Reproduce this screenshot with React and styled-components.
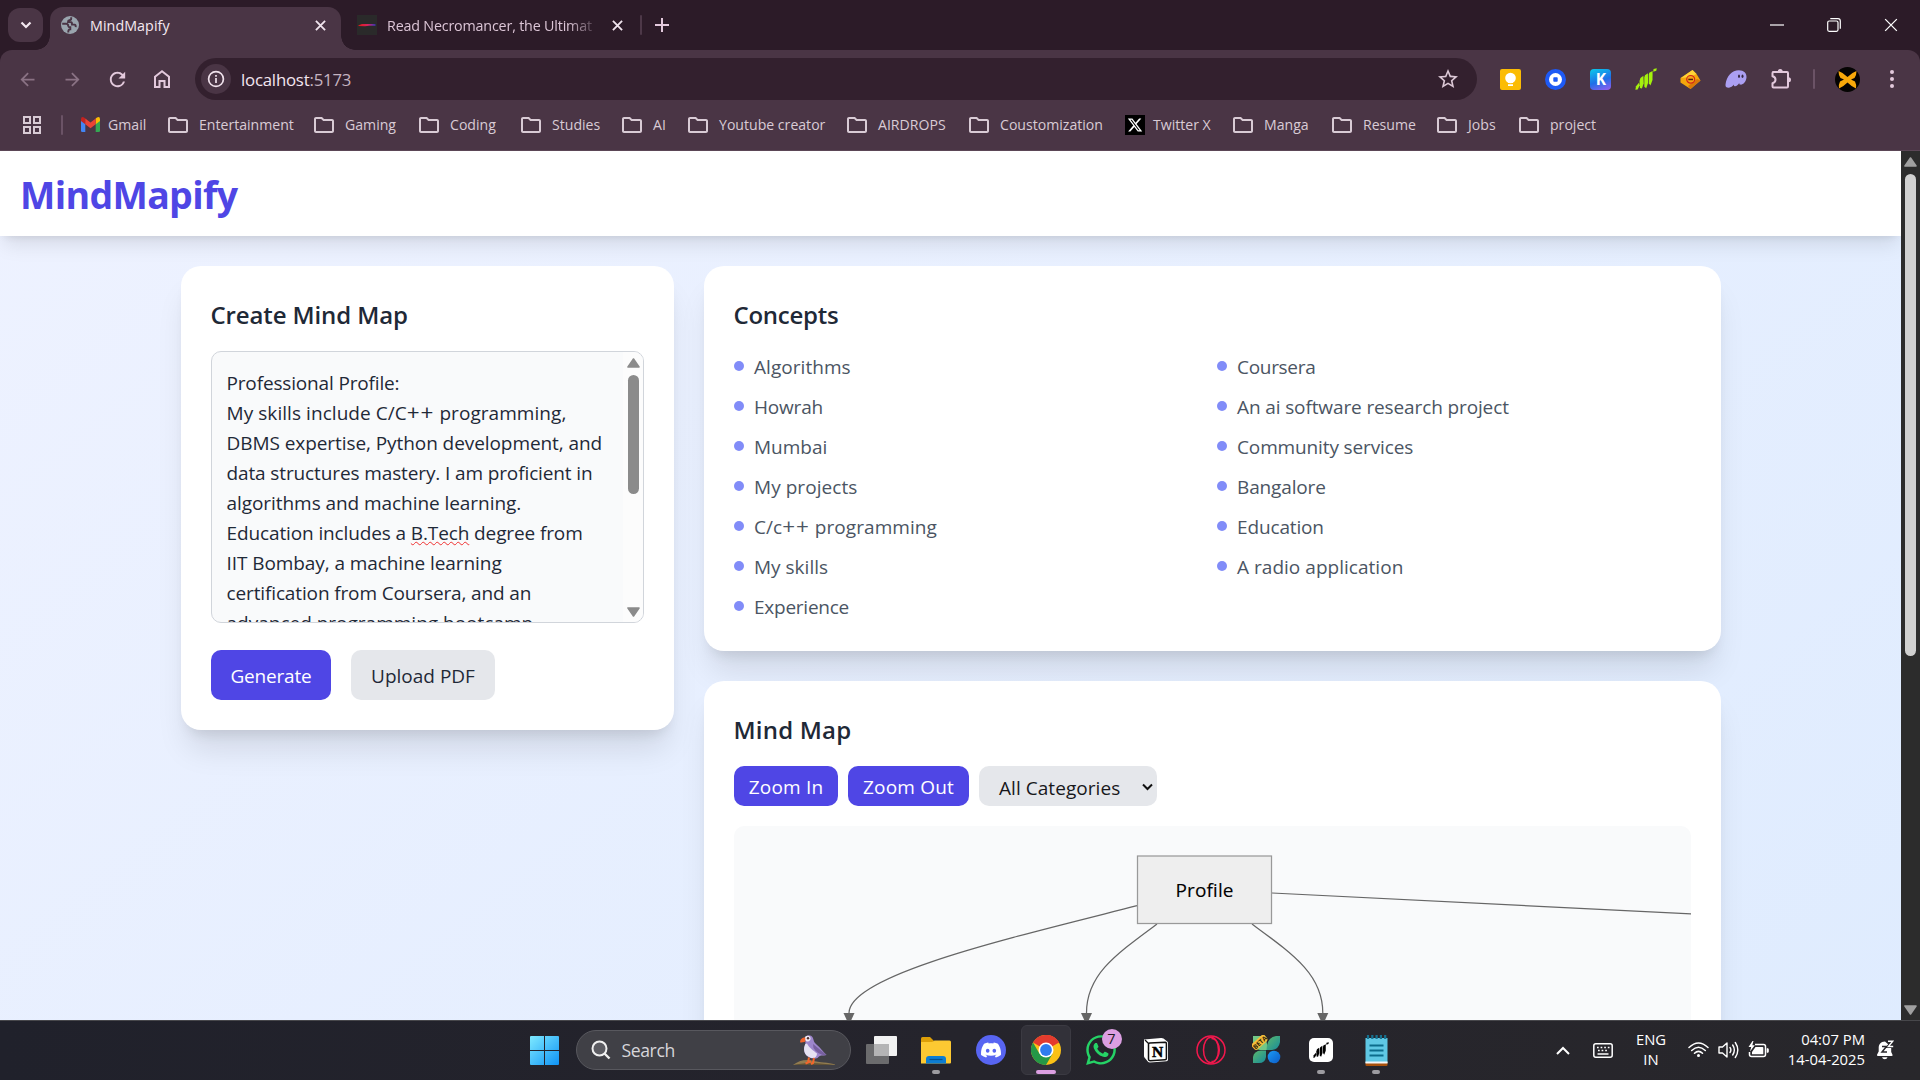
import React from "react";
import styled, { createGlobalStyle } from "styled-components";
import {
  MdArrowBack,
  MdArrowForward,
  MdRefresh,
  MdOutlineFolder,
  MdStarOutline,
} from "react-icons/md";
import { FaXTwitter, FaWhatsapp } from "react-icons/fa6";
import { SiDiscord } from "react-icons/si";

const FONT = '"Open Sans", "Noto Sans", sans-serif';

const GlobalStyle = createGlobalStyle`
  * { box-sizing: border-box; }
  body { margin: 0; background: #2c1b28; font-family: ${FONT}; overflow: hidden; }
  svg { display: block; flex: none; }
`;

const Screen = styled.div`
  width: 1920px;
  height: 1080px;
  display: flex;
  flex-direction: column;
  overflow: hidden;
`;

/* ---------- browser chrome ---------- */

const Browser = styled.header`
  background: #2c1b28;
  flex: none;
  color: #ecdde8;
`;

const TabStrip = styled.div`
  height: 50px;
  display: flex;
  align-items: center;
  padding-left: 8px;
`;

const TabSearch = styled.div`
  width: 35px;
  height: 34px;
  border-radius: 12px;
  background: #4a3545;
  display: grid;
  place-items: center;
`;

const Tab = styled.div`
  position: relative;
  align-self: flex-end;
  height: 43px;
  width: ${(p) => p.$w}px;
  margin-left: ${(p) => p.$ml || 0}px;
  padding: 0 ${(p) => p.$pr}px 7px 11px;
  display: flex;
  align-items: center;
  background: ${(p) => (p.$active ? "#4a3545" : "transparent")};
  border-radius: 13px 13px 0 0;
  ${(p) =>
    p.$active &&
    `
    &::before, &::after {
      content: "";
      position: absolute;
      bottom: 0;
      width: 14px;
      height: 14px;
    }
    &::before { left: -14px; background: radial-gradient(circle at 0 0, transparent 13.5px, #4a3545 14px); }
    &::after { right: -14px; background: radial-gradient(circle at 100% 0, transparent 13.5px, #4a3545 14px); }
  `}
`;

const TabTitle = styled.span`
  flex: 1;
  margin: 0 ${(p) => p.$mr || 10}px 0 ${(p) => p.$ml}px;
  font-size: 14.3px;
  letter-spacing: ${(p) => p.$ls || 0}px;
  white-space: nowrap;
  color: ${(p) => (p.$fade ? "#dcc5d6" : "#f4e9f1")};
  ${(p) => p.$fade && "mask-image: linear-gradient(90deg, #000 86%, rgba(0, 0, 0, 0.1) 100%);"}
`;

const Rule = styled.span`
  width: 2px;
  height: 20px;
  border-radius: 1px;
  background: ${(p) => p.$color || "#6b5366"};
  margin: 0 ${(p) => p.$mr || 0}px 0 ${(p) => p.$ml || 0}px;
`;

const WindowButtons = styled.div`
  margin: 0 1px 0 auto;
  display: flex;
  align-items: center;
  height: 48px;
`;

const WindowButton = styled.span`
  width: 57px;
  display: grid;
  place-items: center;
`;

const Toolbar = styled.div`
  height: 58px;
  padding: 0 0 0 5px;
  display: flex;
  align-items: center;
  background: #4a3545;
  border-radius: 12px 12px 0 0;
`;

const NavButton = styled.span`
  width: 44.9px;
  display: grid;
  place-items: center;
  color: ${(p) => (p.$off ? "#8a7284" : "#e3c9dc")};
`;

const Omnibox = styled.div`
  width: 1282px;
  height: 42px;
  margin-left: 10.4px;
  padding: 0 17px 0 6px;
  border-radius: 21px;
  background: #33202e;
  display: flex;
  align-items: center;
`;

const SiteInfo = styled.span`
  width: 30px;
  height: 30px;
  border-radius: 50%;
  background: #4a3545;
  display: grid;
  place-items: center;
`;

const Url = styled.span`
  flex: 1;
  margin-left: 10px;
  font-size: 16.8px;
  letter-spacing: -0.2px;
  color: #f3e6f0;
  i { font-style: normal; color: #c5b3c0; }
`;

const Extensions = styled.div`
  margin-left: 11.5px;
  display: flex;
  align-items: center;
`;

const ExtButton = styled.span`
  width: 45px;
  display: grid;
  place-items: center;
`;

const MenuButton = styled(ExtButton)`
  margin-left: 10px;
`;

const KTile = styled.span`
  width: 21px;
  height: 21px;
  border-radius: 4px;
  background: linear-gradient(160deg, #0bc3ea 5%, #1f6fe8 55%, #9a5cf0 100%);
  color: #fff;
  font-size: 15.5px;
  font-weight: 700;
  line-height: 21px;
  text-align: center;
`;

const Bookmarks = styled.div`
  height: 43px;
  padding: 0 0 9px 23px;
  display: flex;
  align-items: center;
  background: #4a3545;
  border-bottom: 1px solid #5b4656;
`;

const Bookmark = styled.span`
  width: ${(p) => p.$w}px;
  flex: none;
  display: flex;
  align-items: center;
  gap: ${(p) => p.$gap || 11}px;
  font-size: 14.1px;
  letter-spacing: ${(p) => p.$ls || 0}px;
  white-space: nowrap;
  color: #d9cbd5;
  svg { margin: 0 ${(p) => (p.$folder ? -1.5 : 0)}px; }
`;

const XTile = styled.span`
  width: 20px;
  height: 20px;
  background: #000;
  color: #fff;
  display: grid;
  place-items: center;
`;

/* ---------- page ---------- */

const Viewport = styled.div`
  flex: 1;
  min-height: 0;
  display: flex;
`;

const Page = styled.div`
  flex: 1;
  overflow: hidden;
  background: linear-gradient(to bottom right, #eef2ff, #dbeafe) 0 0 / 100% 1495px;
`;

const PageHeader = styled.div`
  height: 85px;
  padding: 0 20px;
  display: flex;
  align-items: center;
  background: #fff;
  box-shadow: 0 12px 19px -4px rgba(0, 0, 0, 0.1), 0 5px 8px -5px rgba(0, 0, 0, 0.1);
`;

const Brand = styled.h1`
  margin: 2px 0 0;
  font-size: 37.5px;
  font-weight: 700;
  letter-spacing: -0.68px;
  color: #4f46e5;
`;

const Content = styled.main`
  padding: 30px 0 0 181px;
  display: grid;
  grid-template-columns: 493px 1017px;
  gap: 30px;
  align-items: start;
`;

const Column = styled.div`
  display: grid;
  gap: 30px;
`;

const Card = styled.section`
  height: ${(p) => p.$h}px;
  padding: 30px;
  border-radius: 20px;
  background: #fff;
  box-shadow: 0 25px 31px -6px rgba(0, 0, 0, 0.1), 0 10px 13px -7px rgba(0, 0, 0, 0.1);
`;

const CardTitle = styled.h2`
  margin: 0 0 20px -0.5px;
  height: 35px;
  line-height: 38px;
  font-size: 24px;
  font-weight: 600;
  letter-spacing: ${(p) => p.$ls || 0}px;
  color: #1f2937;
`;

const NoteBox = styled.div`
  height: 272px;
  display: flex;
  border: 1px solid #d1d5db;
  border-radius: 10px;
  background: #f9fafb;
  overflow: hidden;
`;

const NoteText = styled.div`
  flex: 1;
  padding: 16px 0 0 14.5px;
`;

const NoteLine = styled.div`
  height: 30px;
  line-height: 30px;
  font-size: 19px;
  letter-spacing: ${(p) => p.$ls || 0}px;
  white-space: nowrap;
  color: #1f2937;
`;

const Plus = styled.b`
  font-size: 22.5px;
  font-weight: 400;
  line-height: 0;
  letter-spacing: 0.9px;
`;

const Misspelled = styled.span`
  text-decoration: underline wavy #f03030 1.3px;
  text-underline-offset: 1px;
  text-decoration-skip-ink: none;
`;

const NoteScroll = styled.div`
  width: 20px;
  background: #fcfcfc;
  display: flex;
  flex-direction: column;
  align-items: center;
  padding: 6px 0 5px;
`;

const Thumb = styled.span`
  width: ${(p) => p.$w}px;
  height: ${(p) => p.$h}px;
  border-radius: 6px;
  background: ${(p) => p.$color};
  margin: 7px 0 auto;
`;

const ButtonRow = styled.div`
  display: flex;
  gap: ${(p) => p.$gap}px;
  margin-top: ${(p) => p.$mt || 0}px;
`;

const Button = styled.button`
  width: ${(p) => p.$w}px;
  height: ${(p) => p.$h}px;
  padding: 2px 0 0;
  border: 0;
  border-radius: 10px;
  font-family: inherit;
  font-size: 19px;
  font-weight: ${(p) => (p.$primary ? 500 : 400)};
  letter-spacing: ${(p) => p.$ls || 0}px;
  color: ${(p) => (p.$primary ? "#fff" : "#1f2937")};
  background: ${(p) => (p.$primary ? "#4f46e5" : "#e5e7eb")};
`;

const Picker = styled.div`
  width: 178px;
  height: 40px;
  padding: 3px 4.5px 0 20px;
  border-radius: 10px;
  background: #e5e7eb;
  display: flex;
  align-items: center;
  justify-content: space-between;
  font-size: 19px;
  letter-spacing: 0.05px;
  white-space: nowrap;
  color: #18181b;
  svg { margin-top: -2px; }
`;

const ConceptGrid = styled.div`
  margin-top: -5px;
  display: grid;
  grid-template-rows: repeat(7, 40px);
  grid-auto-flow: column;
  grid-template-columns: 1fr 1fr;
  column-gap: 9px;
`;

const Concept = styled.div`
  display: flex;
  align-items: center;
  gap: 10px;
  font-size: 19px;
  letter-spacing: ${(p) => p.$ls || 0}px;
  color: #4b5563;
  span { padding-top: 1px; }
  &::before {
    content: "";
    width: 10px;
    height: 10px;
    border-radius: 50%;
    background: #818cf8;
  }
`;

const Canvas = styled.div`
  height: 500px;
  margin-top: 20px;
  border-radius: 10px;
  background: #f9fafb;
  overflow: hidden;
`;

const PageScroll = styled.div`
  width: 19px;
  background: #2c2c2c;
  display: flex;
  flex-direction: column;
  align-items: center;
  padding: 6px 0 5px;
`;

/* ---------- taskbar ---------- */

const Taskbar = styled.footer`
  height: 60px;
  flex: none;
  display: flex;
  align-items: flex-start;
  padding-left: 517px;
  background: linear-gradient(90deg, #20212b, #25242c 50%, #28272b);
  border-top: 1px solid #47474b;
  color: #fff;
`;

const TaskItem = styled.div`
  position: relative;
  width: ${(p) => p.$w || 55}px;
  height: 58px;
  display: grid;
  place-items: center;
  &::after {
    content: "";
    position: absolute;
    bottom: 5px;
    left: 50%;
    transform: translateX(-50%);
    width: ${(p) => (p.$state === "active" ? 20 : 8)}px;
    height: 4px;
    border-radius: 2px;
    background: ${(p) =>
      p.$state === "active" ? "#dc9fe2" : p.$state === "open" ? "#9c9ba0" : "transparent"};
  }
`;

const ActiveTile = styled.span`
  width: 50px;
  height: 50px;
  border-radius: 6px;
  background: #323139;
  border: 1px solid #3b3a42;
  display: grid;
  place-items: center;
`;

const SearchPill = styled.div`
  width: 275px;
  height: 40px;
  margin: 9px 4px 0 3.5px;
  padding: 0 14px 0 14px;
  display: flex;
  align-items: center;
  border-radius: 20px;
  background: #404046;
  border: 1px solid #58585e;
  font-size: 17.6px;
  letter-spacing: -0.4px;
  color: #d6d6da;
  span { flex: 1; margin-left: 11px; }
`;

const Discord = styled.span`
  width: 30px;
  height: 30px;
  border-radius: 50%;
  background: #5865f2;
  display: grid;
  place-items: center;
  color: #fff;
`;

const Badge = styled.span`
  position: absolute;
  left: 28px;
  top: 8px;
  width: 20px;
  height: 20px;
  border-radius: 50%;
  background: #dc9fe2;
  color: #1e1b22;
  font-size: 14.5px;
  line-height: 20px;
  text-align: center;
`;

const WhiteTile = styled.span`
  width: 24px;
  height: 24px;
  border-radius: 5px;
  background: #fff;
  display: grid;
  place-items: center;
`;

const Tray = styled.div`
  margin-left: auto;
  padding-right: 15px;
  display: flex;
  align-items: center;
  height: 58px;
`;

const TraySlot = styled.span`
  width: ${(p) => p.$w}px;
  display: grid;
  place-items: center;
`;

const TrayText = styled.div`
  width: ${(p) => p.$w}px;
  margin-top: -2px;
  text-align: ${(p) => p.$align};
  font-size: 14.8px;
  line-height: 20px;
  letter-spacing: ${(p) => p.$ls || 0}px;
  white-space: nowrap;
`;

/* ---------- small drawings ---------- */

const Cross = ({ s = 11, w = 2, c = "#f0e4ed" }) => (
  <svg width={s} height={s} viewBox="0 0 12 12">
    <path d="M1 1 11 11M11 1 1 11" stroke={c} strokeWidth={w} fill="none" />
  </svg>
);

const Triangle = ({ down, c, w = 13, h = 10 }) => (
  <svg width={w} height={h} viewBox="0 0 13 10">
    <path
      d={down ? "M1 1H12L6.5 9Z" : "M1 9H12L6.5 1Z"}
      fill={c}
      stroke={c}
      strokeWidth="1.6"
      strokeLinejoin="round"
    />
  </svg>
);

const Globe = () => (
  <svg width="18" height="18" viewBox="0 0 18 18">
    <circle cx="9" cy="9" r="9" fill="#9aa5ae" />
    <path
      d="M1.200 7.800H5.200Q7.200 8 7.200 9.800 7.400 11.300 9.300 11.300V13.300Q7.300 13.500 7.300 15.500V16.600"
      stroke="#4a3545"
      strokeWidth="1.900"
      fill="none"
    />
    <path
      d="M10.200 1.300V2.600Q10.200 4.300 8.300 4.300 7 4.400 7 6H9.300Q11 6 11 7.700V8.600H13.500Q15 8.800 14.700 11.200"
      stroke="#4a3545"
      strokeWidth="1.900"
      fill="none"
    />
  </svg>
);

const NovelIcon = () => (
  <svg width="20" height="20" viewBox="0 0 20 20">
    <defs>
      <linearGradient id="novel">
        <stop offset="0" stopColor="#e01818" />
        <stop offset=".55" stopColor="#d6245e" />
        <stop offset="1" stopColor="#3b35c8" />
      </linearGradient>
    </defs>
    <path d="M0 0H20V20H0Z" fill="#2a2a2a" />
    <path d="M1.500 10.200 5 9H15L18.500 9.300V10.700H12L8 11.300 1.500 11Z" fill="url(#novel)" />
  </svg>
);

const HomeIcon = () => (
  <svg width="18" height="20" viewBox="0 0 18 20">
    <path
      d="M2 7.800 9 2.200 16 7.800V18H11.500V12H6.500V18H2Z"
      fill="none"
      stroke="#e3c9dc"
      strokeWidth="2"
    />
  </svg>
);

const InfoIcon = () => (
  <svg width="18" height="18" viewBox="0 0 18 18">
    <circle cx="9" cy="9" r="7.400" fill="none" stroke="#f0e2ec" strokeWidth="1.700" />
    <path d="M9 8V13M9 5V6.700" stroke="#f0e2ec" strokeWidth="1.700" />
  </svg>
);

const AppsIcon = () => (
  <svg width="18" height="18" viewBox="0 0 18 18" fill="none" stroke="#d9cbd5" strokeWidth="2">
    <path d="M1 1H7V7H1ZM11 1H17V7H11ZM1 11H7V17H1ZM11 11H17V17H11Z" />
  </svg>
);

const GmailIcon = () => (
  <svg width="19" height="15" viewBox="0 0 19 15">
    <path d="M0 2V13.700Q0 15 1.300 15H4.300V5.300Z" fill="#4285f4" />
    <path d="M19 2V13.700Q19 15 17.700 15H14.700V5.300Z" fill="#34a853" />
    <path d="M14.700 1.500 16 .5Q19-.8 19 2.300V4L14.700 7.300Z" fill="#fbbc04" />
    <path d="M4.300 1.500 3 .5Q0-.8 0 2.300V4L4.300 7.300Z" fill="#c5221f" />
    <path d="M4.300 1.500 9.500 5.500 14.700 1.500V7.300L9.500 11.200 4.300 7.300Z" fill="#ea4335" />
  </svg>
);

const Bars = ({ s = 22, c = "#a4f20c" }) => (
  <svg width={s} height={s} viewBox="0 0 21 21" fill={c}>
    <path d="M.3 20.700 1 17.500 3.800 14 4.500 16.500 2.500 20.500Z" />
    <path d="M4.300 12.500 5.200 9.500 8 7.500 8.300 14.500 6.600 19.500 4.700 19Z" />
    <path d="M8.900 9 9.500 7 12.300 5 12.500 14 10.700 19.300 8.900 18Z" />
    <path d="M13.100 6.500 13.600 4.500 16.800 2.800 16.700 11.500 14.700 16.800 13.200 14.500Z" />
    <path d="M17.400 3.500 17.700 1 20.800.3 20.300 2.700Z" />
  </svg>
);

const KeepIcon = () => (
  <svg width="21" height="21" viewBox="0 0 21 21">
    <rect width="21" height="21" rx="2" fill="#fbbc04" />
    <circle cx="10.500" cy="9" r="5.300" fill="#fff" />
    <path d="M8 13H13V14H8ZM8 15.200H13V17H8Z" fill="#fff" />
  </svg>
);

const RingIcon = () => (
  <svg width="21" height="21" viewBox="0 0 21 21">
    <circle cx="10.500" cy="10.500" r="10.500" fill="#1e5af5" />
    <circle cx="10.500" cy="10.500" r="6.500" fill="#fff" />
    <rect x="8.300" y="8.300" width="4.400" height="4.400" rx=".8" fill="#1e5af5" />
  </svg>
);

const DiamondIcon = () => (
  <svg width="21" height="21" viewBox="0 0 21 21">
    <path d="M12.500 1 16.500 5 20.500 11.500 10.500 20 .5 13.500V9Z" fill="#f5a70c" />
    <path d="M12.500 1 16.500 5 10 8 1 9Z" fill="#ffd338" />
    <path d="M10.500 20 20.500 11.500 17 10 8 17Z" fill="#d97708" />
    <ellipse cx="10.700" cy="10.300" rx="4" ry="3.800" fill="#f7a414" stroke="#d0241c" strokeWidth="1.200" />
    <path d="M8.300 9.700H13V11.200H8.300Z" fill="#53200a" />
  </svg>
);

const GhostIcon = () => (
  <svg width="22" height="18" viewBox="0 0 22 18">
    <path
      d="M.5 14.500C1.500 6 7 .3 13.800.3 19 .3 21.700 3.500 21.500 7.300 21.200 12 18 15 15.300 14.600 14.300 14.500 14.200 13.700 14.300 13 13 15 11.500 16.500 9.800 16.300 8.800 16.100 8.700 15.300 8.900 14.600 7.500 16.500 5.800 17.600 4 17.700 1.500 17.800.2 17 .5 14.500Z"
      fill="#ab9ff2"
    />
    <ellipse cx="14" cy="6.300" rx="1" ry="1.700" fill="#352842" />
    <ellipse cx="17.500" cy="6.300" rx="1" ry="1.700" fill="#352842" />
  </svg>
);

const PuzzleIcon = () => (
  <svg width="22" height="22" viewBox="0 0 22 22">
    <path
      d="M3 4H17Q18 4 18 5V18.500Q18 19.500 17 19.500H3.500Q2.500 19.500 2.500 18.500V15.200Q5.500 14.500 5.500 11.800 5.500 9 2.500 8.300V5Q2.500 4 3.500 4Z"
      fill="none"
      stroke="#e3c9dc"
      strokeWidth="2"
      strokeLinejoin="round"
    />
    <path d="M7.700 3.500Q7.700 1 10.200 1T12.700 3.500ZM18.500 9.200Q21 9.200 21 11.700T18.500 14.200Z" fill="#e3c9dc" />
  </svg>
);

const AvatarIcon = () => (
  <svg width="25" height="25" viewBox="0 0 25 25">
    <circle cx="12.500" cy="12.500" r="12.500" fill="#050403" />
    <path
      d="M3.500 4Q8 5.500 12.500 10 17 5.500 21.500 4 21.500 8.500 19.500 11L16 12.500 20 14.500Q21.500 17 21 21.500 16.500 19.500 12.500 15.500 8.500 19.500 4 21.500 3.500 17 5 14.500L9 12.500 5.500 11Q3.500 8.500 3.500 4Z"
      fill="#f7a80a"
    />
  </svg>
);

const MapDrawing = () => (
  <svg width="957" height="500" viewBox="734 826 957 500">
    <g fill="none" stroke="#666" strokeWidth="1.250">
      <path d="M1137 905.700C1010 938 849 975 849 1013" />
      <path d="M1157 924C1115 955 1086.500 975 1086.500 1013" />
      <path d="M1252 924C1294 955 1322.800 975 1322.800 1013" />
      <path d="M1272 893 1691 914" />
    </g>
    <g fill="#666">
      <path d="M843.500 1013H854.500L849 1025Z" />
      <path d="M1081 1013H1092L1086.500 1025Z" />
      <path d="M1317.300 1013H1328.300L1322.800 1025Z" />
    </g>
    <rect x="1137.500" y="856" width="134" height="67.500" fill="#eee" stroke="#999" strokeWidth="1.250" />
    <text
      x="1204.500"
      y="897"
      textAnchor="middle"
      fontFamily={FONT}
      fontSize="19"
      textLength="58"
      fill="#000"
      stroke="#000"
      strokeWidth=".12"
    >
      Profile
    </text>
  </svg>
);

const WindowsLogo = () => (
  <svg width="29" height="29" viewBox="0 0 29 29">
    <defs>
      <linearGradient id="win" x1="0" y1="0" x2="1" y2="1" gradientUnits="objectBoundingBox">
        <stop offset="0" stopColor="#7eeaff" />
        <stop offset="1" stopColor="#0f93f5" />
      </linearGradient>
    </defs>
    <path d="M0 1Q0 0 1 0H14V14H0ZM15 0H28Q29 0 29 1V14H15ZM0 15H14V29H1Q0 29 0 28ZM15 15H29V28Q29 29 28 29H15Z" fill="url(#win)" />
  </svg>
);

const Puffin = () => (
  <svg width="43" height="32" viewBox="0 0 43 32">
    <path d="M0 31C5 27 12 25 19 26.500 27 29 35 28 42 30.500V31Z" fill="#927c50" />
    <path d="M0 31C9 28.500 25 28.500 42 31Z" fill="#5f5136" />
    <path d="M12.500 4C13 .5 18 .3 19.700 3.500 21 6.500 20.500 8 23.500 10.500 28 14 30 18 33.500 21 29.500 22 27 20.500 24.500 24 20 25.500 14.500 24 12 19.500 10 15 13 11 12.300 8Z" fill="#9d86cc" />
    <path d="M12.300 10C10 14 10.500 21 17 23.500 21.500 25 24 23 24 19.500 20.500 16.500 16 14 14 9.500Z" fill="#e6e2f2" />
    <path d="M20 10C25 14 30 18 33.500 21 28 22 23 18 20.500 14Z" fill="#77609f" />
    <ellipse cx="14.600" cy="4.600" rx="2.900" ry="2.800" fill="#eee9f4" />
    <circle cx="15" cy="4.300" r="1.200" fill="#4c2f2f" />
    <path d="M12.200 3.500C9 3.500 6.800 5.500 7.200 8.500 9 8.500 11 8.300 12.400 7.500Z" fill="#f0632c" />
    <path d="M16 23.500 15 28.500 12.500 29.500M21 24 20 29 18 30M15 28 18 27.500" stroke="#f2662c" strokeWidth="2" fill="none" />
  </svg>
);

const TaskViewIcon = () => (
  <svg width="31" height="28" viewBox="0 0 31 28">
    <rect x="8" y="0" width="23" height="20" rx="1" fill="#f2f2f2" />
    <rect x="0" y="8" width="23" height="20" rx="1" fill="#6b6b6d" />
    <rect x="8" y="8" width="15" height="12" fill="#b4b4b5" />
  </svg>
);

const ExplorerIcon = () => (
  <svg width="30" height="27" viewBox="0 0 30 27">
    <path d="M0 1.500Q0 0 1.500 0H9L12.500 3.500V8H0Z" fill="#dd9f08" />
    <path d="M0 5H11L13.500 3.500H28.500Q30 3.500 30 5V25.500Q30 26.500 29 26.500H0Z" fill="#fdc932" />
    <path d="M5 26.500V22Q5 19 8 19H22Q25 19 25 22V26.500Z" fill="#0d7dd2" />
    <path d="M8.500 22.500H21.500" stroke="#07518f" strokeWidth="1.200" />
  </svg>
);

const ChromeIcon = () => (
  <svg width="30" height="30" viewBox="0 0 30 30">
    <circle cx="15" cy="15" r="15" fill="#fbc116" />
    <path d="M15 15 2 7.500A15 15 0 0 1 28 7.500Z" fill="#e33b2e" />
    <path d="M15 0A15 15 0 0 1 28 7.500H15Z" fill="#e33b2e" />
    <path d="M2 7.500A15 15 0 0 0 15 30L21.500 18.700 15 15 8.500 18.700Z" fill="#259847" />
    <circle cx="15" cy="15" r="7.500" fill="#fff" />
    <circle cx="15" cy="15" r="5.900" fill="#2f7cee" />
  </svg>
);

const NotionIcon = () => (
  <svg width="26" height="27" viewBox="0 0 26 27">
    <path d="M1 2.500 18 1Q19.500.9 20.500 1.600L24 4.200Q25 5 25 6V22.500Q25 24 23.500 24.200L7 25.500Q5.700 25.600 5 24.700L1.700 20.800Q1 20 1 19Z" fill="#fff" />
    <path d="M5.500 7.300Q5.500 6.200 6.700 6.100L22.300 5.200Q23.400 5.200 23.400 6.200V21.500Q23.400 22.600 22.200 22.700L7 23.700Q5.500 23.700 5.500 22.300Z" fill="#fff" stroke="#111" strokeWidth="1.500" />
    <path d="M2 3 5.500 6.500" stroke="#111" strokeWidth="1.300" />
    <text x="14.500" y="20" textAnchor="middle" fontFamily='"Liberation Serif", serif' fontWeight="700" fontSize="15.500" fill="#000" stroke="#000" strokeWidth=".5">
      N
    </text>
  </svg>
);

const OperaIcon = () => (
  <svg width="30" height="30" viewBox="0 0 30 30" fill="none" stroke="#f3184d" strokeWidth="1.500">
    <circle cx="15" cy="15" r="14" />
    <ellipse cx="15" cy="15" rx="7.500" ry="12.800" />
    <path d="M15.500 3.500C26 4 26 26 15.500 26.500" strokeWidth="1.300" />
  </svg>
);

const BetaIcon = () => (
  <svg width="29" height="30" viewBox="0 0 29 30">
    <defs>
      <linearGradient id="leaf" x1="0" y1="0" x2="1" y2="1">
        <stop offset="0" stopColor="#5cb86c" />
        <stop offset="1" stopColor="#178c9c" />
      </linearGradient>
      <linearGradient id="drop" x1="0" y1="0" x2="1" y2="1">
        <stop offset="0" stopColor="#1b9bf5" />
        <stop offset="1" stopColor="#0c5cc8" />
      </linearGradient>
    </defs>
    <path d="M1 1H10Q15 3 16 15H8Q1 14 1 7Z" fill="#72c886" />
    <path d="M28 1V7Q27 14 20 15H14.500Q15 2 24 1Z" fill="url(#leaf)" />
    <path d="M1 28V22Q2 16 9 15.500H14V22Q13 28 7 28Z" fill="url(#leaf)" />
    <circle cx="22" cy="22" r="6.300" fill="url(#drop)" />
    <g transform="rotate(-42 8 7)">
      <rect x="-1" y="3" width="17" height="8" rx="3" fill="#f4bd3a" />
      <text x="7.600" y="9.600" textAnchor="middle" fontFamily={FONT} fontWeight="700" fontSize="6.500" fill="#2c1f0a">
        BETA
      </text>
    </g>
  </svg>
);

const NotepadIcon = () => (
  <svg width="23" height="31" viewBox="0 0 23 31">
    <path d="M.5 27H22.500V30Q22.500 31 21.500 31H1.500Q.5 31 .5 30Z" fill="#a8510c" />
    <path d="M.5 3H22.500V28H.5Z" fill="#5fc8e4" />
    <path d="M.5 26.500H22.500V28.500H.5Z" fill="#f2f6f8" />
    <path d="M4.500 10.500H18.500M4.500 15.500H18.500M4.500 20.500H18.500" stroke="#0c6c8c" strokeWidth="1.900" />
    <path d="M3 0V4M7.300 0V4M11.600 0V4M15.900 0V4M20.200 0V4" stroke="#16718f" strokeWidth="2.200" />
  </svg>
);

const KeyboardIcon = () => (
  <svg width="20" height="15" viewBox="0 0 20 15" stroke="#fff" fill="none">
    <rect x=".8" y=".8" width="18.400" height="13.400" rx="2" strokeWidth="1.500" />
    <path d="M4 4.500H16.500M5 7.500H15.500" strokeWidth="1.700" strokeDasharray="1.700 1.900" />
    <path d="M4.500 11H15.500" strokeWidth="1.500" />
  </svg>
);

const WifiIcon = () => (
  <svg width="21" height="16" viewBox="0 0 21 16" stroke="#fff" fill="none" strokeWidth="1.500" strokeLinecap="round">
    <path d="M1 5.500Q10.500-3.500 20 5.500M3.700 8.500Q10.500 2 17.300 8.500M6.500 11.300Q10.500 7.500 14.500 11.300" />
    <circle cx="10.500" cy="13.500" r="1.500" fill="#fff" stroke="none" />
  </svg>
);

const VolumeIcon = () => (
  <svg width="21" height="18" viewBox="0 0 21 18" stroke="#fff" fill="none" strokeWidth="1.400" strokeLinecap="round" strokeLinejoin="round">
    <path d="M1 6H4.500L9 2V16L4.500 12H1Z" />
    <path d="M12 6.500Q13.800 9 12 11.500M14.700 4Q18 9 14.700 14M17.300 1.500Q22.300 9 17.300 16.500" />
  </svg>
);

const BatteryIcon = () => (
  <svg width="21" height="18" viewBox="0 0 21 18">
    <path d="M7 3.500H15.500Q17.500 3.500 17.500 5.500V13.500Q17.500 15.500 15.500 15.500H3.500Q1.500 15.500 1.500 13.500V11" fill="none" stroke="#fff" strokeWidth="1.500" />
    <path d="M19 7.500H19.700Q20.500 7.500 20.500 8.500V10.500Q20.500 11.500 19.700 11.500H19Z" fill="#fff" stroke="#fff" strokeWidth=".6" />
    <path d="M7.500 6H14.500Q15.300 6 15.300 6.800V13.300H4V11Z" fill="#fff" />
    <path d="M4.500 0 .5 6H3.200L2 10.500 6.800 4.200H4.300L5.500 0Z" fill="#fff" />
  </svg>
);

const BellIcon = () => (
  <svg width="18" height="20" viewBox="0 0 18 20">
    <path d="M9 1.500C4.500 1.500 2.700 4.500 2.700 8V11.500L1 14.800Q.8 16 2 16H15.500Q17 16 16.500 14.800L15.200 12V7Z" fill="#fff" />
    <path d="M6 17.300H11.500Q11 19.300 8.800 19.300 6.600 19.300 6 17.300Z" fill="#fff" />
    <path d="M6 6.500H10.500L6 12H11" stroke="#28272b" strokeWidth="1.500" fill="none" />
    <path d="M12 1.200H16.800L12.400 6.500H17.200" stroke="#28272b" strokeWidth="3.200" fill="none" />
    <path d="M12 1.200H16.800L12.400 6.500H17.200" stroke="#fff" strokeWidth="1.400" fill="none" />
  </svg>
);

/* ---------- data ---------- */

const folders1 = [
  ["Entertainment", 146],
  ["Gaming", 105],
  ["Coding", 102],
  ["Studies", 101],
  ["AI", 66],
  ["Youtube creator", 159],
  ["AIRDROPS", 122],
  ["Coustomization", 157],
];
const folders2 = [
  ["Manga", 99],
  ["Resume", 105],
  ["Jobs", 82],
  ["project", 90],
];

const noteLines = [
  ["Professional Profile:", -0.16],
  [
    <>
      My skills include C/C<Plus>++</Plus> programming,
    </>,
    0.06,
  ],
  ["DBMS expertise, Python development, and", -0.07],
  ["data structures mastery. I am proficient in", -0.12],
  ["algorithms and machine learning.", -0.06],
  [
    <>
      Education includes a <Misspelled>B.Tech</Misspelled> degree from
    </>,
    -0.12,
  ],
  ["IIT Bombay, a machine learning", -0.08],
  ["certification from Coursera, and an", -0.13],
  ["advanced programming bootcamp.", 0],
];

const concepts = [
  ["Algorithms", 0.05],
  ["Howrah", -0.2],
  ["Mumbai", 0],
  ["My projects", 0.05],
  [
    <>
      C/c<Plus>++</Plus> programming
    </>,
    0.07,
  ],
  ["My skills", 0],
  ["Experience", -0.24],
  ["Coursera", -0.3],
  ["An ai software research project", -0.12],
  ["Community services", -0.13],
  ["Bangalore", -0.14],
  ["Education", -0.14],
  ["A radio application", 0.03],
];

const Folder = ({ name, w }) => (
  <Bookmark $w={w} $folder>
    <MdOutlineFolder size={24} />
    {name}
  </Bookmark>
);

export default function App() {
  return (
    <Screen>
      <GlobalStyle />
      <Browser>
        <TabStrip>
          <TabSearch>
            <svg width="12" height="8" viewBox="0 0 12 8">
              <path d="M1.500 1.500 6 6 10.500 1.500" stroke="#f4e9f1" strokeWidth="2.200" fill="none" />
            </svg>
          </TabSearch>
          <Tab $active $w={291} $ml={7} $pr={15}>
            <Globe />
            <TabTitle $ml={11} $ls={0.05}>
              MindMapify
            </TabTitle>
            <Cross />
          </Tab>
          <Tab $w={282} $ml={5} $pr={5}>
            <NovelIcon />
            <TabTitle $ml={10} $mr={15} $ls={-0.18} $fade>
              Read Necromancer, the Ultimat
            </TabTitle>
            <Cross />
          </Tab>
          <Rule $color="#4d3848" $ml={12} $mr={13} />
          <svg width="14" height="14" viewBox="0 0 14 14">
            <path d="M7 0V14M0 7H14" stroke="#e3c9dc" strokeWidth="2" />
          </svg>
          <WindowButtons>
            <WindowButton>
              <svg width="14" height="2">
                <path d="M0 1H14" stroke="#fff" strokeWidth="1.200" />
              </svg>
            </WindowButton>
            <WindowButton>
              <svg width="14" height="14" viewBox="0 0 14 14" fill="none" stroke="#fff" strokeWidth="1.200">
                <rect x=".7" y="3" width="10.300" height="10.300" rx="1.500" />
                <path d="M3.300.7H11Q13.300.7 13.300 3V10.800" />
              </svg>
            </WindowButton>
            <WindowButton>
              <Cross s={14} w={1.1} c="#fff" />
            </WindowButton>
          </WindowButtons>
        </TabStrip>
        <Toolbar>
          <NavButton $off>
            <MdArrowBack size={21} />
          </NavButton>
          <NavButton $off>
            <MdArrowForward size={21} />
          </NavButton>
          <NavButton>
            <MdRefresh size={23} />
          </NavButton>
          <NavButton>
            <HomeIcon />
          </NavButton>
          <Omnibox>
            <SiteInfo>
              <InfoIcon />
            </SiteInfo>
            <Url>
              localhost<i>:5173</i>
            </Url>
            <MdStarOutline size={24} color="#dcc8d6" />
          </Omnibox>
          <Extensions>
            <ExtButton>
              <KeepIcon />
            </ExtButton>
            <ExtButton>
              <RingIcon />
            </ExtButton>
            <ExtButton>
              <KTile>K</KTile>
            </ExtButton>
            <ExtButton>
              <Bars />
            </ExtButton>
            <ExtButton>
              <DiamondIcon />
            </ExtButton>
            <ExtButton>
              <GhostIcon />
            </ExtButton>
            <ExtButton>
              <PuzzleIcon />
            </ExtButton>
          </Extensions>
          <Rule $ml={9.5} $mr={20} />
          <AvatarIcon />
          <MenuButton>
            <svg width="4" height="18" viewBox="0 0 4 18" fill="#e3c9dc">
              <circle cx="2" cy="2" r="2" />
              <circle cx="2" cy="9" r="2" />
              <circle cx="2" cy="16" r="2" />
            </svg>
          </MenuButton>
        </Toolbar>
        <Bookmarks>
          <AppsIcon />
          <Rule $ml={20} $mr={18} />
          <Bookmark $w={86} $gap={8}>
            <GmailIcon />
            Gmail
          </Bookmark>
          {folders1.map(([n, w]) => (
            <Folder key={n} name={n} w={w} />
          ))}
          <Bookmark $w={107} $gap={8}>
            <XTile>
              <FaXTwitter size={16} />
            </XTile>
            Twitter X
          </Bookmark>
          {folders2.map(([n, w]) => (
            <Folder key={n} name={n} w={w} />
          ))}
        </Bookmarks>
      </Browser>

      <Viewport>
        <Page>
          <PageHeader>
            <Brand>MindMapify</Brand>
          </PageHeader>
          <Content>
            <Card $h={464}>
              <CardTitle $ls={-0.12}>Create Mind Map</CardTitle>
              <NoteBox>
                <NoteText>
                  {noteLines.map(([l, ls], i) => (
                    <NoteLine key={i} $ls={ls}>
                      {l}
                    </NoteLine>
                  ))}
                </NoteText>
                <NoteScroll>
                  <Triangle c="#8b8b8b" />
                  <Thumb $w={11} $h={119} $color="#8b8b8b" />
                  <Triangle down c="#8b8b8b" />
                </NoteScroll>
              </NoteBox>
              <ButtonRow $gap={20} $mt={27}>
                <Button $primary $w={120} $h={50} $ls={-0.18}>
                  Generate
                </Button>
                <Button $w={144} $h={50}>
                  Upload PDF
                </Button>
              </ButtonRow>
            </Card>
            <Column>
              <Card $h={385}>
                <CardTitle $ls={-0.25}>Concepts</CardTitle>
                <ConceptGrid>
                  {concepts.map(([c, ls], i) => (
                    <Concept key={i} $ls={ls}>
                      <span>{c}</span>
                    </Concept>
                  ))}
                </ConceptGrid>
              </Card>
              <Card $h={690}>
                <CardTitle $ls={0.2}>Mind Map</CardTitle>
                <ButtonRow $gap={10}>
                  <Button $primary $w={104} $h={40} $ls={0.2}>
                    Zoom In
                  </Button>
                  <Button $primary $w={121} $h={40} $ls={0.2}>
                    Zoom Out
                  </Button>
                  <Picker>
                    All Categories
                    <svg width="11" height="8" viewBox="0 0 11 8">
                      <path d="M1 1.500 5.500 6 10 1.500" stroke="#111" strokeWidth="2" fill="none" />
                    </svg>
                  </Picker>
                </ButtonRow>
                <Canvas>
                  <MapDrawing />
                </Canvas>
              </Card>
            </Column>
          </Content>
        </Page>
        <PageScroll>
          <Triangle c="#a0a0a0" />
          <Thumb $w={11} $h={482} $color="#d0d0d0" />
          <Triangle down c="#a0a0a0" />
        </PageScroll>
      </Viewport>

      <Taskbar>
        <TaskItem>
          <WindowsLogo />
        </TaskItem>
        <SearchPill>
          <svg width="20" height="20" viewBox="0 0 20 20" fill="none" stroke="#f0f0f0" strokeWidth="2">
            <circle cx="8.500" cy="8.500" r="7" fill="#5c5c62" />
            <path d="M13.500 13.500 18.500 18.500" strokeWidth="2.400" />
          </svg>
          <span>Search</span>
          <Puffin />
        </SearchPill>
        <TaskItem $w={54}>
          <TaskViewIcon />
        </TaskItem>
        <TaskItem $state="open">
          <ExplorerIcon />
        </TaskItem>
        <TaskItem>
          <Discord>
            <SiDiscord size={20} />
          </Discord>
        </TaskItem>
        <TaskItem $state="active">
          <ActiveTile>
            <ChromeIcon />
          </ActiveTile>
        </TaskItem>
        <TaskItem>
          <FaWhatsapp size={34} color="#25d366" />
          <Badge>7</Badge>
        </TaskItem>
        <TaskItem>
          <NotionIcon />
        </TaskItem>
        <TaskItem>
          <OperaIcon />
        </TaskItem>
        <TaskItem>
          <BetaIcon />
        </TaskItem>
        <TaskItem $state="open">
          <WhiteTile>
            <Bars s={16} c="#000" />
          </WhiteTile>
        </TaskItem>
        <TaskItem $state="open">
          <NotepadIcon />
        </TaskItem>
        <Tray>
          <TraySlot $w={48}>
            <svg width="14" height="9" viewBox="0 0 14 9">
              <path d="M1 8 7 2 13 8" stroke="#fff" strokeWidth="2" fill="none" />
            </svg>
          </TraySlot>
          <TraySlot $w={32}>
            <KeyboardIcon />
          </TraySlot>
          <TrayText $w={64} $align="center">
            ENG
            <br />
            IN
          </TrayText>
          <TraySlot $w={30}>
            <WifiIcon />
          </TraySlot>
          <TraySlot $w={30}>
            <VolumeIcon />
          </TraySlot>
          <TraySlot $w={30}>
            <BatteryIcon />
          </TraySlot>
          <TrayText $w={92} $align="right">
            04:07 PM
            <br />
            14-04-2025
          </TrayText>
          <TraySlot $w={40}>
            <BellIcon />
          </TraySlot>
        </Tray>
      </Taskbar>
    </Screen>
  );
}
